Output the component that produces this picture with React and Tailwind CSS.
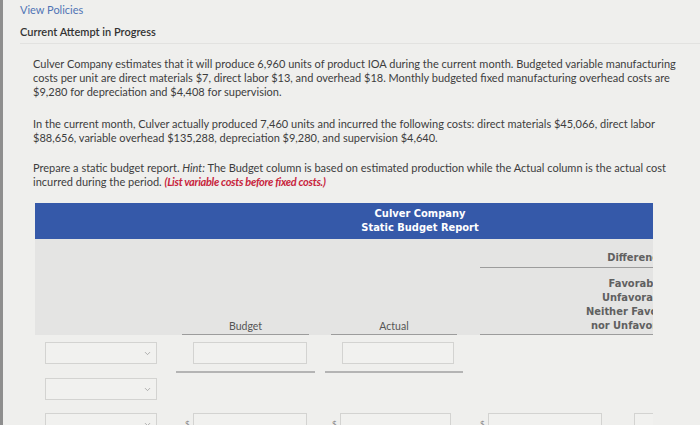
import React from "react";
import { ChevronDown } from "lucide-react";

const TEXT = "font-['Lato',sans-serif]";
const HEAD = "font-['DejaVu_Sans_Condensed','DejaVu_Sans',sans-serif]";
const BOX = "h-[22px] border border-[#d3d3d1] bg-[#f1f1ef]";
const RULE = "h-[2px] bg-[#b4b4b4]";

function Select() {
  return (
    <div className={`${BOX} w-[112px] flex items-center justify-end pr-[4px]`}>
      <ChevronDown className="w-[9px] h-[9px] text-[#9a9a9a]" strokeWidth={2} />
    </div>
  );
}

function Money({ sign, w = "w-[114px]" }) {
  return (
    <div className="flex items-center">
      <span className={`${TEXT} text-[8px] text-[#888] w-[8px]`}>{sign ? "$" : ""}</span>
      <div className={`${BOX} ${w}`} />
    </div>
  );
}

export default function App() {
  return (
    <div className="w-[700px] h-[425px] overflow-hidden bg-[#efefed] border-l-[3px] border-[#8e8e8e]">
      <div className="pl-[17px]">
        <div className={`${TEXT} text-[11px] text-[#4f74b5] pt-[3px] leading-[14px]`}>View Policies</div>
        <div className={`${TEXT} text-[11px] font-semibold text-[#333] mt-[8px] leading-[14px]`}>
          Current Attempt in Progress
        </div>
        <div className="h-px bg-[#e2e2e0] mt-[4px]" />
      </div>

      <div className={`${TEXT} text-[11px] text-[#3d3d3d] leading-[14px] pl-[30px] pt-[13px] whitespace-nowrap`}>
        <p>
          Culver Company estimates that it will produce 6,960 units of product IOA during the current month. Budgeted variable manufacturing
          <br />
          costs per unit are direct materials $7, direct labor $13, and overhead $18. Monthly budgeted fixed manufacturing overhead costs are
          <br />
          $9,280 for depreciation and $4,408 for supervision.
        </p>
        <p className="mt-[18px] leading-[13.5px]">
          In the current month, Culver actually produced 7,460 units and incurred the following costs: direct materials $45,066, direct labor
          <br />
          $88,656, variable overhead $135,288, depreciation $9,280, and supervision $4,640.
        </p>
        <p className="mt-[17px]">
          Prepare a static budget report. <i>Hint:</i> The Budget column is based on estimated production while the Actual column is the actual cost
          <br />
          incurred during the period.{" "}
          <b className="italic text-[#c8243c] tracking-[-0.3px]">(List variable costs before fixed costs.)</b>
        </p>
      </div>

      <div className="ml-[32px] mt-[14px] w-[618px] overflow-hidden">
        <div className={`${HEAD} h-[36px] bg-[#3559a9] flex flex-col items-center justify-center text-white text-[11px] font-bold leading-[14px] pl-[152px]`}>
          <div>Culver Company</div>
          <div>Static Budget Report</div>
        </div>

        <div className="h-[96px] bg-[#e4e4e3] flex items-end">
          <div className="w-[141px] shrink-0" />
          <div className="w-[139px] shrink-0 px-[6px]">
            <div className={`${TEXT} text-[10.5px] text-[#555] text-center leading-[12px] pb-[2px] border-b border-[#9c9c9c]`}>Budget</div>
          </div>
          <div className="w-[10px] shrink-0" />
          <div className="w-[138px] shrink-0 px-[6px]">
            <div className={`${TEXT} text-[10.5px] text-[#555] text-center leading-[12px] pb-[2px] border-b border-[#9c9c9c]`}>Actual</div>
          </div>
          <div className="w-[17px] shrink-0" />
          <div className={`${HEAD} w-[312px] shrink-0 font-bold text-[11px] text-[#606060] text-center pb-[1px] border-b border-[#9c9c9c]`}>
            <div className="leading-[14px] pb-[2px] border-b border-[#9c9c9c] mb-[9px]">Difference</div>
            <div className="leading-[14px]">Favorable</div>
            <div className="leading-[14px]">Unfavorable</div>
            <div className="leading-[14px]">Neither Favorable</div>
            <div className="leading-[14px]">nor Unfavorable</div>
          </div>
        </div>

        <div className="flex flex-col pt-[7px]">
          <div className="flex items-start">
            <div className="w-[141px] shrink-0 pl-[10px]"><Select /></div>
            <div className="w-[139px] shrink-0">
              <div className="pl-[17px]"><div className={`${BOX} w-[114px]`} /></div>
              <div className={`${RULE} mt-[7px]`} />
            </div>
            <div className="w-[10px] shrink-0" />
            <div className="w-[138px] shrink-0">
              <div className="pl-[17px]"><div className={`${BOX} w-[112px]`} /></div>
              <div className={`${RULE} mt-[7px]`} />
            </div>
          </div>
          <div className="flex mt-[5px]">
            <div className="w-[141px] shrink-0 pl-[10px]"><Select /></div>
          </div>
          <div className="flex mt-[13px] items-center">
            <div className="w-[141px] shrink-0 pl-[10px]"><Select /></div>
            <div className="w-[139px] shrink-0 pl-[9px]"><Money sign /></div>
            <div className="w-[10px] shrink-0" />
            <div className="w-[138px] shrink-0 pl-[7px]"><Money sign w="w-[111px]" /></div>
            <div className="w-[17px] shrink-0" />
            <div className="w-[138px] shrink-0"><Money sign /></div>
            <div className="w-[16px] shrink-0" />
            <div className={`${BOX} w-[60px] shrink-0`} />
          </div>
        </div>
      </div>
    </div>
  );
}
